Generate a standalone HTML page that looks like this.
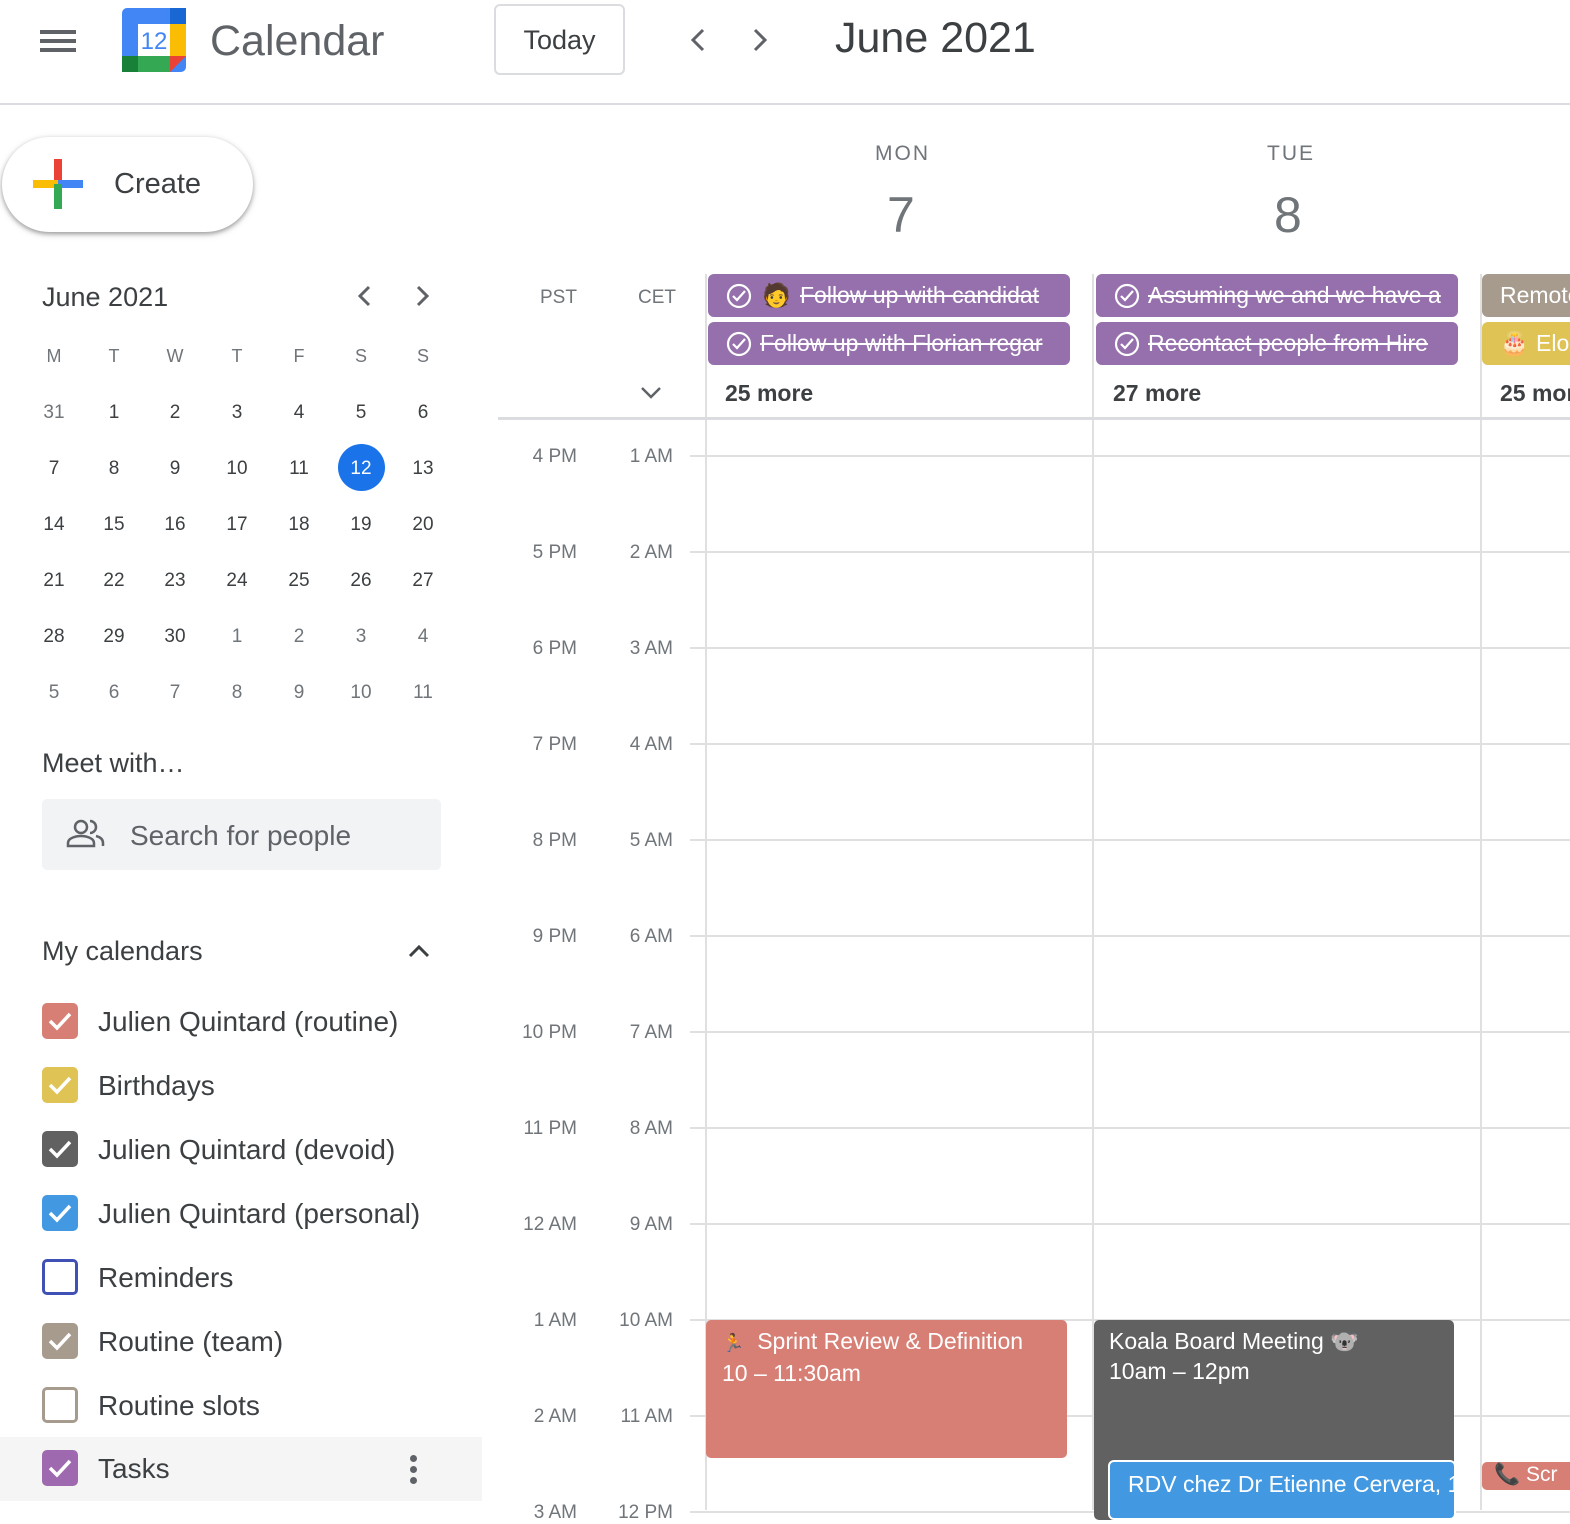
<!DOCTYPE html>
<html><head><meta charset="utf-8"><style>
*{box-sizing:border-box;margin:0;padding:0}
body{width:1570px;height:1510px;overflow:hidden;background:#fff;font-family:"Liberation Sans",Arial,sans-serif;color:#3c4043;position:relative}
.a{position:absolute}
.hb{position:absolute;left:40px;width:36px;height:4px;background:#5f6368}
.mc{position:absolute;width:50px;text-align:center;font-size:19px;color:#3c4043;transform:translate(-25px,-9px)}
.cb{position:absolute;left:42px;width:36px;height:36px;border-radius:5px}
.cb svg{position:absolute;left:5px;top:6px}
.cl{position:absolute;left:98px;font-size:28px;color:#3c4043}
.hl{position:absolute;left:690px;right:0;height:2px;background:#e0e0e0}
.vl{position:absolute;top:274px;bottom:0;width:2px;background:#e0e0e0}
.tl{position:absolute;font-size:19px;color:#70757a;text-align:right;width:80px}
.chip{position:absolute;height:43px;border-radius:6px;background:#9570ac;color:#fff;font-size:23px;white-space:nowrap;overflow:hidden;line-height:43px;padding-left:52px;text-decoration:line-through}
.chip svg{position:absolute;left:18px;top:9px}
.more{position:absolute;font-size:23px;font-weight:bold;color:#3c4043;white-space:nowrap}
</style></head><body>
<div class="hb" style="top:30px"></div><div class="hb" style="top:39px"></div><div class="hb" style="top:48px"></div>
<svg class="a" style="left:122px;top:8px" width="64" height="64" viewBox="0 0 64 64">
<rect x="0" y="0" width="64" height="64" rx="5" fill="#4285f4"/>
<rect x="48" y="0" width="16" height="16" fill="#1967d2"/>
<rect x="48" y="16" width="16" height="32" fill="#fbbc04"/>
<rect x="0" y="48" width="48" height="16" fill="#34a853"/>
<rect x="0" y="48" width="16" height="16" fill="#188038"/>
<polygon points="48,48 64,48 48,64" fill="#ea4335"/>
<rect x="16" y="16" width="32" height="32" fill="#fff"/>
<text x="32" y="41" font-size="24" fill="#4285f4" text-anchor="middle" font-family="Liberation Sans">12</text>
</svg>
<div class="a" style="left:210px;top:17px;font-size:43px;color:#5f6368">Calendar</div>
<div class="a" style="left:494px;top:4px;width:131px;height:71px;border:2px solid #dadce0;border-radius:6px;font-size:27px;text-align:center;line-height:69px;color:#3c4043">Today</div>
<svg class="a" style="left:685px;top:26px" width="90" height="28"><path d="M18 4 L8 14 L18 24" stroke="#5f6368" stroke-width="3" fill="none"/><path d="M70 4 L80 14 L70 24" stroke="#5f6368" stroke-width="3" fill="none"/></svg>
<div class="a" style="left:835px;top:14px;font-size:43px;color:#3c4043">June 2021</div>
<div class="a" style="left:0;right:0;top:103px;height:2px;background:#dadce0"></div>

<div class="a" style="left:2px;top:137px;width:251px;height:95px;border-radius:48px;background:#fff;box-shadow:0 2px 4px rgba(0,0,0,.3),0 2px 8px rgba(0,0,0,.15)"></div>
<svg class="a" style="left:33px;top:159px" width="50" height="50"><rect x="21" y="0" width="8" height="25" fill="#ea4335"/><rect x="0" y="21" width="25" height="8" fill="#fbbc04"/><rect x="25" y="21" width="25" height="8" fill="#4285f4"/><rect x="21" y="25" width="8" height="25" fill="#34a853"/></svg>
<div class="a" style="left:114px;top:168px;font-size:29px;color:#3c4043">Create</div>

<div class="a" style="left:42px;top:282px;font-size:27px">June 2021</div>
<svg class="a" style="left:350px;top:283px" width="90" height="28"><path d="M19 4 L10 13 L19 22" stroke="#5f6368" stroke-width="3" fill="none"/><path d="M68 4 L77 13 L68 22" stroke="#5f6368" stroke-width="3" fill="none"/></svg>
<div class="a" style="left:338px;top:444px;width:47px;height:47px;border-radius:50%;background:#1a73e8"></div>
<div id="mini"></div>

<div class="a" style="left:42px;top:748px;font-size:27px">Meet with…</div>
<div class="a" style="left:42px;top:799px;width:399px;height:71px;background:#f1f3f4;border-radius:5px"></div>
<svg class="a" style="left:66px;top:818px" width="40" height="32" viewBox="0 0 40 32"><circle cx="15" cy="9" r="6" stroke="#5f6368" stroke-width="2.5" fill="none"/><path d="M2 28 v-3 c0-5 8-7 13-7 s13 2 13 7 v3 z" stroke="#5f6368" stroke-width="2.5" fill="none"/><path d="M24 3 a6 6 0 0 1 0 12 M30 18 c4 1 7 3 7 7 v3" stroke="#5f6368" stroke-width="2.5" fill="none"/></svg>
<div class="a" style="left:130px;top:820px;font-size:28px;color:#5f6368">Search for people</div>

<div class="a" style="left:42px;top:936px;font-size:27px">My calendars</div>
<svg class="a" style="left:406px;top:940px" width="28" height="20"><path d="M4 16 L13 7 L22 16" stroke="#3c4043" stroke-width="3" fill="none"/></svg>
<div class="a" style="left:0;top:1437px;width:482px;height:64px;background:#f5f5f5"></div>
<div id="cals"></div>
<div class="a" style="left:410px;top:1455px;width:7px;height:7px;border-radius:50%;background:#5f6368;box-shadow:0 11px 0 #5f6368,0 22px 0 #5f6368"></div>

<div class="a" style="left:875px;top:142px;font-size:21px;letter-spacing:2px;color:#70757a">MON</div>
<div class="a" style="left:887px;top:186px;font-size:50px;color:#70757a">7</div>
<div class="a" style="left:1267px;top:142px;font-size:21px;letter-spacing:2px;color:#70757a">TUE</div>
<div class="a" style="left:1274px;top:186px;font-size:50px;color:#70757a">8</div>
<div class="a" style="left:540px;top:287px;font-size:19px;color:#70757a">PST</div>
<div class="a" style="left:638px;top:287px;font-size:19px;color:#70757a">CET</div>
<svg class="a" style="left:639px;top:384px" width="24" height="18"><path d="M3 4 L12 13 L21 4" stroke="#5f6368" stroke-width="2.5" fill="none"/></svg>
<div class="vl" style="left:705px"></div><div class="vl" style="left:1092px"></div><div class="vl" style="left:1480px"></div>
<div class="a" style="left:498px;right:0;top:417px;height:3px;background:#dadce0"></div>
<div id="grid"></div>

<div class="chip" style="left:708px;top:274px;width:362px;padding-left:92px"><svg width="26" height="26"><circle cx="13" cy="13" r="11" stroke="#fff" stroke-width="2.2" fill="none"/><path d="M7 13 l4 4 l8 -9" stroke="#fff" stroke-width="2.2" fill="none"/></svg><span class="a" style="left:54px;top:0;text-decoration:none">🧑</span>Follow up with candidat</div>
<div class="chip" style="left:708px;top:322px;width:362px"><svg width="26" height="26"><circle cx="13" cy="13" r="11" stroke="#fff" stroke-width="2.2" fill="none"/><path d="M7 13 l4 4 l8 -9" stroke="#fff" stroke-width="2.2" fill="none"/></svg>Follow up with Florian regar</div>
<div class="chip" style="left:1096px;top:274px;width:362px"><svg width="26" height="26"><circle cx="13" cy="13" r="11" stroke="#fff" stroke-width="2.2" fill="none"/><path d="M7 13 l4 4 l8 -9" stroke="#fff" stroke-width="2.2" fill="none"/></svg>Assuming we and we have a</div>
<div class="chip" style="left:1096px;top:322px;width:362px"><svg width="26" height="26"><circle cx="13" cy="13" r="11" stroke="#fff" stroke-width="2.2" fill="none"/><path d="M7 13 l4 4 l8 -9" stroke="#fff" stroke-width="2.2" fill="none"/></svg>Recontact people from Hire</div>
<div class="chip" style="left:1482px;top:274px;width:100px;background:#a79b8e;padding-left:18px;text-decoration:none">Remote</div>
<div class="chip" style="left:1482px;top:322px;width:100px;background:#e0c355;padding-left:54px;text-decoration:none"><span class="a" style="left:18px">🎂</span>Elo</div>
<div class="more" style="left:725px;top:380px">25 more</div>
<div class="more" style="left:1113px;top:380px">27 more</div>
<div class="more" style="left:1500px;top:380px">25 more</div>

<div class="a" style="left:706px;top:1320px;width:361px;height:138px;background:#d77f75;border-radius:5px;color:#fff;font-size:23px;padding:6px 0 0 16px;line-height:30px"><span style="font-size:18px">🏃</span>&nbsp; Sprint Review &amp; Definition<br>10 – 11:30am</div>
<div class="a" style="left:1094px;top:1320px;width:360px;height:200px;background:#616161;border-radius:5px;color:#fff;font-size:23px;padding:6px 0 0 15px;line-height:30px">Koala Board Meeting 🐨<br>10am – 12pm</div>
<div class="a" style="left:1108px;top:1460px;width:348px;height:60px;background:#4299e1;border:2px solid #fff;border-radius:6px;color:#fff;font-size:23px;padding:9px 0 0 18px;white-space:nowrap;overflow:hidden">RDV chez Dr Etienne Cervera, 1</div>
<div class="a" style="left:1482px;top:1462px;width:100px;height:28px;background:#d77f75;border-radius:5px;color:#fff;font-size:21px;padding:0 0 0 12px;line-height:26px;white-space:nowrap">📞 Scr</div>

<script>
var m=document.getElementById('mini'),cols=[54,114,175,237,299,361,423],h='';
['M','T','W','T','F','S','S'].forEach(function(d,i){h+='<div class="mc" style="left:'+cols[i]+'px;top:355px;color:#70757a;font-size:18px">'+d+'</div>'});
var rows=[[31,1,2,3,4,5,6],[7,8,9,10,11,12,13],[14,15,16,17,18,19,20],[21,22,23,24,25,26,27],[28,29,30,1,2,3,4],[5,6,7,8,9,10,11]];
rows.forEach(function(r,ri){r.forEach(function(d,i){var y=411+ri*56;var c=(ri==0&&i==0)||ri==5||(ri==4&&i>2)?'#70757a':'#3c4043';if(ri==1&&i==5)c='#fff';h+='<div class="mc" style="left:'+cols[i]+'px;top:'+y+'px;color:'+c+'">'+d+'</div>'})});
m.innerHTML=h;
var cs=[['#d77f75','Julien Quintard (routine)',1],['#e0c355','Birthdays',1],['#616161','Julien Quintard (devoid)',1],['#4299e1','Julien Quintard (personal)',1],['#3f51b5','Reminders',0],['#a79b8e','Routine (team)',1],['#a79b8e','Routine slots',0],['#9e69af','Tasks',1]];
h='';cs.forEach(function(c,i){var y=1003+i*64;if(i==7)y=1450;
h+='<div class="cb" style="top:'+y+'px;'+(c[2]?'background:'+c[0]:'border:3px solid '+c[0])+'">'+(c[2]?'<svg width="26" height="24"><path d="M3 12 l7 7 l13 -14" stroke="#fff" stroke-width="3.5" fill="none"/></svg>':'')+'</div>';
h+='<div class="cl" style="top:'+(y+3)+'px">'+c[1]+'</div>'});
document.getElementById('cals').innerHTML=h;
var pst=['4 PM','5 PM','6 PM','7 PM','8 PM','9 PM','10 PM','11 PM','12 AM','1 AM','2 AM','3 AM'],cet=['1 AM','2 AM','3 AM','4 AM','5 AM','6 AM','7 AM','8 AM','9 AM','10 AM','11 AM','12 PM'];
h='';pst.forEach(function(p,i){var y=455+i*96;h+='<div class="hl" style="top:'+y+'px"></div><div class="tl" style="left:497px;top:'+(y-9)+'px">'+p+'</div><div class="tl" style="left:593px;top:'+(y-9)+'px">'+cet[i]+'</div>'});
document.getElementById('grid').innerHTML=h;
</script>
</body></html>
